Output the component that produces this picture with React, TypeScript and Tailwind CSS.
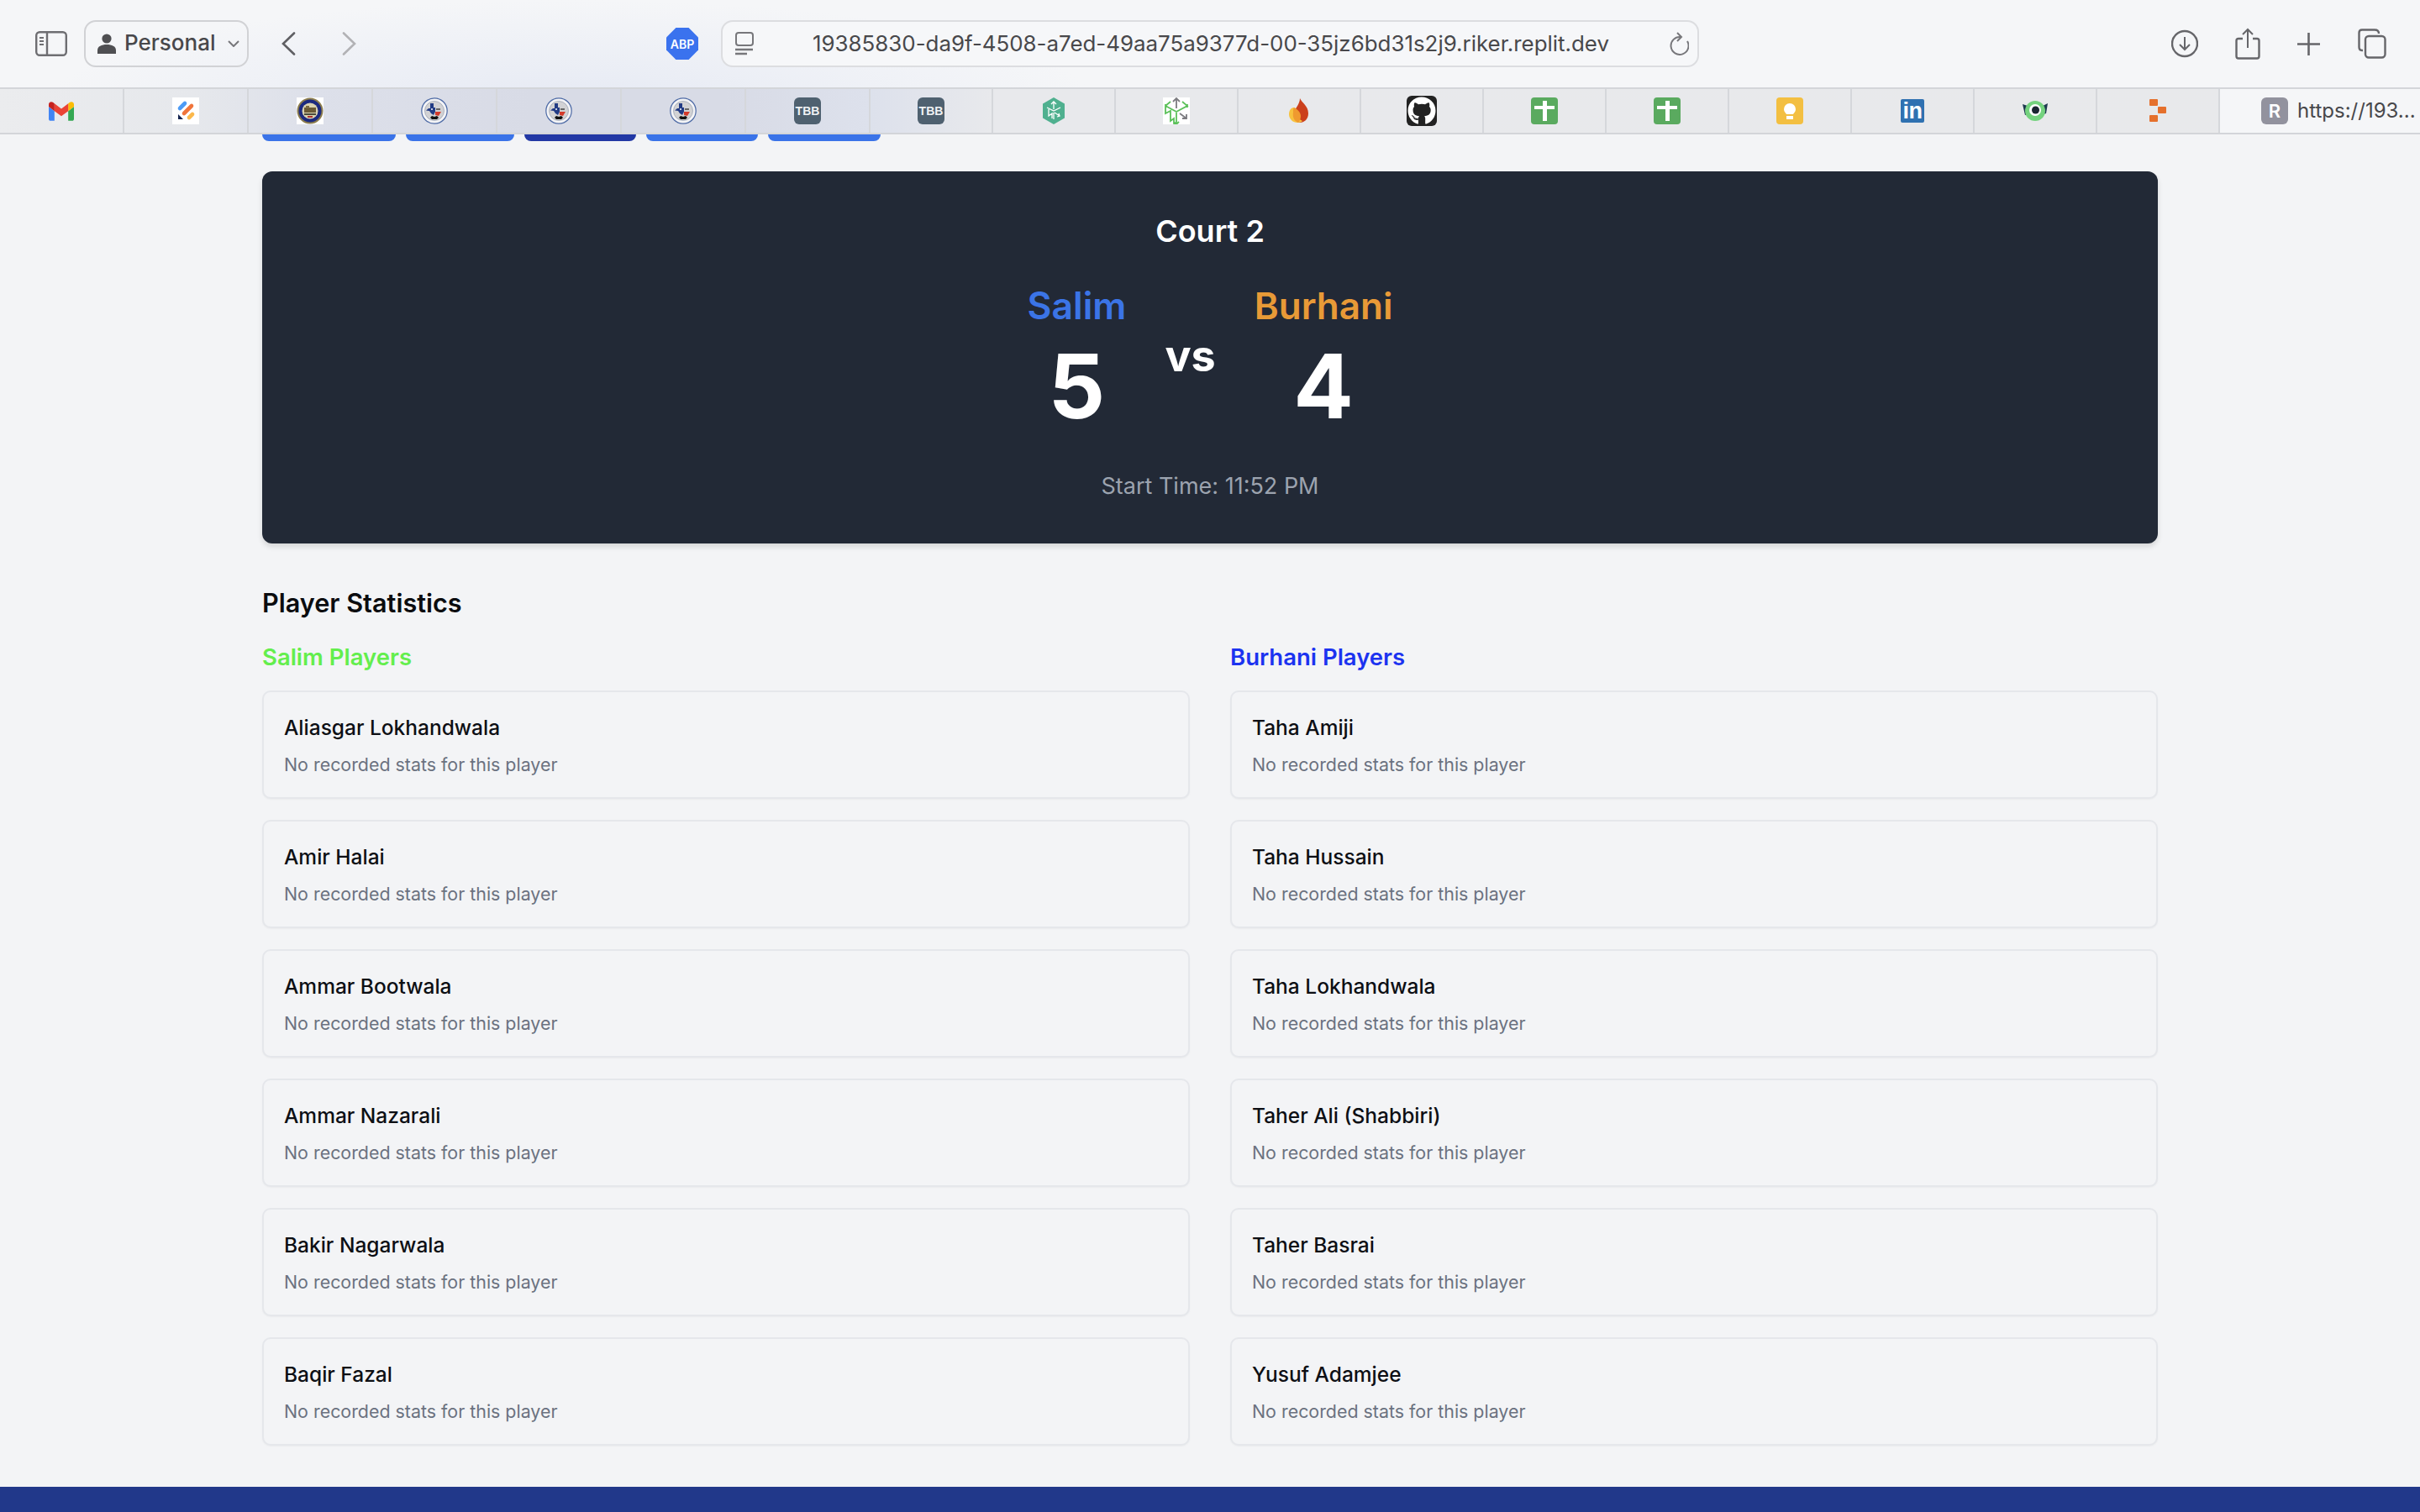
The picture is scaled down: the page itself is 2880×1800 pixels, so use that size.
import React from "react";
import { FaGithub } from "react-icons/fa";

const Gmail = () => (
  <svg width="30" height="23" viewBox="52 42 88 66">
    <path fill="#4285f4" d="M58 108h14V74L52 59v43c0 3.32 2.69 6 6 6" />
    <path fill="#34a853" d="M120 108h14c3.32 0 6-2.69 6-6V59l-20 15" />
    <path fill="#fbbc04" d="M120 48v26l20-15v-8c0-7.42-8.47-11.65-14.4-7.2" />
    <path fill="#ea4335" d="M72 74V48l24 18 24-18v26L96 92" />
    <path fill="#c5221f" d="M52 51v8l20 15V48l-5.6-4.2c-5.94-4.45-14.4-.22-14.4 7.2" />
  </svg>
);

const Jira = () => (
  <svg width="32" height="32" viewBox="0 0 32 32">
    <rect width="32" height="32" fill="#fff" />
    <path d="M9 13 L15 7" stroke="#4c9bf5" strokeWidth="4.6" strokeLinecap="round" />
    <path d="M14 19 L23 10" stroke="#f0743a" strokeWidth="4.6" strokeLinecap="round" />
    <path d="M20 24 L24 20" stroke="#fbb84b" strokeWidth="4.6" strokeLinecap="round" />
    <path d="M7 20 L13 26 H7 Z" fill="#14234f" />
  </svg>
);

const Houston = () => (
  <svg width="32" height="32" viewBox="0 0 32 32">
    <rect width="32" height="32" fill="#fff" />
    <circle cx="16" cy="16" r="15.5" fill="#8c7d4e" />
    <circle cx="16" cy="16" r="13.5" fill="#1c2a80" />
    <circle cx="16" cy="16" r="9.5" fill="#d9d2b0" />
    <rect x="9" y="12" width="14" height="6" fill="#6b5a35" />
    <rect x="11" y="10" width="4" height="3" fill="#7b6a40" />
    <rect x="9" y="19" width="14" height="2" fill="#4b4b3a" />
    <rect x="13" y="22" width="6" height="2" fill="#a33" />
  </svg>
);

const Seal = () => (
  <svg width="32" height="32" viewBox="0 0 32 32">
    <circle cx="16" cy="16" r="15.2" fill="#f4f4f6" stroke="#4d6aa5" strokeWidth="1.2" />
    <circle cx="16" cy="16" r="11.5" fill="#d2d2d4" stroke="#8a93a8" strokeWidth="0.6" />
    <path d="M11 7 H15 V12 H17 V17 L15 21 L12 19 L10 16 L6 15.5 L9 13 H11 Z" fill="#233c85" />
    <path d="M17 17 H24 L21 22 L17 21 Z" fill="#d33a2b" />
    <rect x="18" y="13" width="5" height="2" fill="#666" />
    <path d="M11 24 L13 22 L16 23 L19 22 L21 24 L19 26 H13 Z" fill="#111" />
    <circle cx="13" cy="14" r="1" fill="#fff" />
  </svg>
);

const Tbb = () => (
  <div className="w-[32px] h-[32px] rounded-[6px] bg-[#4f6170] flex items-center justify-center text-[#f0f2f4] text-[14px] font-bold font-['Liberation_Sans',sans-serif]">
    TBB
  </div>
);

const Hex = () => (
  <svg width="28" height="32" viewBox="0 0 28 32" fill="none">
    <path d="M14 0 L27 7.5 V24.5 L14 32 L1 24.5 V7.5 Z" fill="#4fb08f" />
    <path d="M14 5 V14 M11 8 L14 5 L17 8 M6 12 L14 16 L22 12 M21 22 L15 18 M20 19 L21 22 L18 23 M8 14 V22 L12 19 V25 M14 18 V26" stroke="#fff" strokeWidth="1.3" />
  </svg>
);

const Cube = () => (
  <svg width="32" height="32" viewBox="0 0 32 32" fill="none">
    <rect width="32" height="32" fill="#fff" />
    <path d="M16 1 V13 M12 5 L16 1 L20 5 M20 19 L28 25 M28 20 V25 H23" stroke="#7c7c80" strokeWidth="1.8" />
    <path d="M3 10 L9 5 M3 10 L16 17 L29 10 L23 5 M3 10 V19 L9 16 V28 L13 25 V31 L16 32 M16 17 V32 M3 8 V12 M29 8 V12 M13 29 L16 32 L19 29" stroke="#5cc15a" strokeWidth="1.8" />
  </svg>
);

const Flame = () => (
  <svg width="24" height="30" viewBox="0 0 24 30">
    <path d="M13 0 C15 5 23 9 23 18 C23 25 18 29 13 29 C8 29 6 25 6 19 C6 12 13 8 13 0 Z" fill="#cb401d" />
    <path d="M6 11 C2 11 0 15 0 19 C0 25 5 29 10 29 C13 29 15 28 16 27 C11 25 9 20 9 16 C9 14 8 12 6 11 Z" fill="#f7c23e" />
    <path d="M6 11 C10 13 14 17 14 21 C14 24 13 27 11 29 C6 27 4 22 5 17 C5 14 5 12 6 11 Z" fill="#ef9a2f" />
  </svg>
);

const Github = () => (
  <div className="w-[36px] h-[36px] rounded-[6px] bg-[#222222] flex items-center justify-center text-white">
    <FaGithub size={34} />
  </div>
);

const Plus = () => (
  <svg width="32" height="32" viewBox="0 0 32 32">
    <rect width="32" height="32" rx="4" fill="#5aaa5f" />
    <rect x="14" y="4" width="5" height="24" fill="#fff" />
    <rect x="4" y="10" width="24" height="4" fill="#fff" />
  </svg>
);

const Bulb = () => (
  <svg width="32" height="32" viewBox="0 0 32 32">
    <rect width="32" height="32" rx="4" fill="#f3bf41" />
    <path d="M16 7 a7 7 0 0 1 7 7 c0 3 -2 4 -3 6 H12 c-1 -2 -3 -3 -3 -6 a7 7 0 0 1 7 -7 Z" fill="#fff" />
    <rect x="12" y="22" width="8" height="4" fill="#fff" />
  </svg>
);

const Linkedin = () => (
  <div className="w-[28px] h-[28px] rounded-[2px] bg-[#2f71b1] flex items-center justify-center text-white text-[27px] leading-[28px] font-bold font-['Liberation_Sans',sans-serif] tracking-[-0.5px]">
    in
  </div>
);

const Eye = () => (
  <svg width="32" height="24" viewBox="0 0 32 24">
    <path d="M1 4 L7 6 L8 16 L4 17 Z" fill="#1e3a4f" />
    <path d="M31 3 L25 6 L26 16 L29 15 Z" fill="#1e3a4f" />
    <circle cx="16" cy="12" r="12" fill="#74d27e" />
    <circle cx="16" cy="11" r="7" fill="#fff" />
    <circle cx="16.5" cy="11" r="4.5" fill="#1a2531" />
  </svg>
);

const Dash = () => (
  <svg width="20" height="28" viewBox="0 0 20 28">
    <rect x="0" y="0" width="10" height="8" rx="1" fill="#e5702c" />
    <rect x="10" y="9" width="10" height="8" rx="1" fill="#e5702c" />
    <rect x="0" y="19" width="10" height="8" rx="1" fill="#e5702c" />
  </svg>
);

const Tab = ({ w, children }: { w: string; children: React.ReactNode }) => (
  <div className={`${w} h-full shrink-0 flex items-center justify-center border-r-2 border-[#d5d7db]`}>{children}</div>
);

const tabsA: React.ReactNode[] = [<Gmail />, <Jira />, <Houston />, <Seal />, <Seal />, <Seal />, <Tbb />];
const tabsB: React.ReactNode[] = [<Tbb />, <Hex />, <Cube />, <Flame />, <Github />, <Plus />, <Plus />, <Bulb />, <Linkedin />, <Eye />, <Dash />];

const Toolbar = () => (
  <div className="h-[104px] flex items-center bg-[radial-gradient(ellipse_620px_120px_at_680px_120px,#e6eaf4,#f5f6f8)] text-[#4b4b4e]">
    <svg className="ml-[42px] shrink-0" width="38" height="30" viewBox="0 0 38 30" fill="none" stroke="#6e6e72" strokeWidth="2.4">
      <rect x="1.2" y="1.2" width="35.6" height="27.6" rx="4" />
      <path d="M14 1.2 V28.8" />
      <path d="M5 8 H10 M5 12 H10 M5 16 H10" strokeWidth="2" />
    </svg>
    <div className="ml-[20px] w-[196px] h-[56px] shrink-0 rounded-[14px] border-2 border-[#d1d2d5] flex items-center pl-[14px]">
      <svg width="22" height="24" viewBox="0 0 22 24" fill="#4f4f52">
        <circle cx="11" cy="6" r="5.6" />
        <path d="M0 24 V20 C0 15 5 13 11 13 C17 13 22 15 22 20 V24 Z" />
      </svg>
      <span className="ml-[10px] text-[26px] leading-[32px] mb-[2px] font-medium font-['Inter',sans-serif] text-[#48484b]">Personal</span>
      <svg className="ml-[14px]" width="14" height="8" viewBox="0 0 14 8" fill="none" stroke="#77777b" strokeWidth="2">
        <path d="M1 1 L7 7 L13 1" />
      </svg>
    </div>
    <svg className="ml-[39px] shrink-0" width="17" height="28" viewBox="0 0 17 28" fill="none" stroke="#5f5f63" strokeWidth="2.6" strokeLinecap="round">
      <path d="M15 1.5 L2 14 L15 26.5" />
    </svg>
    <svg className="ml-[55px] shrink-0" width="17" height="28" viewBox="0 0 17 28" fill="none" stroke="#b2b2b5" strokeWidth="2.6" strokeLinecap="round">
      <path d="M2 1.5 L15 14 L2 26.5" />
    </svg>
    <div className="ml-[369px] w-[38px] h-[38px] shrink-0 bg-[#3a72ee] [clip-path:polygon(30%_0,70%_0,100%_30%,100%_70%,70%_100%,30%_100%,0_70%,0_30%)] flex items-center justify-center text-white text-[14px] font-semibold font-['Inter',sans-serif]">
      ABP
    </div>
    <div className="ml-[27px] w-[1164px] h-[56px] shrink-0 rounded-[14px] border-2 border-[#dcdde0] flex items-center bg-[#f6f7f9]">
      <svg className="ml-[14px] shrink-0" width="24" height="28" viewBox="0 0 24 28" fill="none" stroke="#77777b" strokeWidth="2">
        <rect x="2" y="1" width="20" height="15" rx="3" />
        <path d="M1 21 H22 M1 26 H15" strokeWidth="2.4" />
      </svg>
      <span className="ml-[69px] w-[950px] shrink-0 text-[25.9px] font-['Inter',sans-serif] text-[#48484b] whitespace-nowrap">
        19385830-da9f-4508-a7ed-49aa75a9377d-00-35jz6bd31s2j9.riker.replit.dev
      </span>
      <svg className="ml-[69px] shrink-0" width="24" height="28" viewBox="0 0 24 28" fill="none" stroke="#77777b" strokeWidth="2">
        <path d="M14 6 A10.5 10.5 0 1 0 22 11" />
        <path d="M10 1 L15 6 L10 11" />
      </svg>
    </div>
    <svg className="ml-[562px] shrink-0" width="32" height="34" viewBox="0 0 32 34" fill="none" stroke="#66666a" strokeWidth="2.4">
      <circle cx="16" cy="17" r="15" />
      <path d="M16 9 V24 M10 18 L16 24 L22 18" strokeWidth="2" />
    </svg>
    <svg className="ml-[44px] shrink-0" width="30" height="38" viewBox="0 0 30 38" fill="none" stroke="#66666a" strokeWidth="2.4">
      <path d="M9 13 H4 Q1.5 13 1.5 15.5 V34 Q1.5 36.5 4 36.5 H26 Q28.5 36.5 28.5 34 V15.5 Q28.5 13 26 13 H21" />
      <path d="M15 24 V2 M9 8 L15 2 L21 8" strokeWidth="2" />
    </svg>
    <svg className="ml-[44px] shrink-0" width="27" height="27" viewBox="0 0 27 27" fill="none" stroke="#66666a" strokeWidth="2.6">
      <path d="M13.5 0 V27 M0 13.5 H27" />
    </svg>
    <svg className="ml-[45px] shrink-0" width="34" height="36" viewBox="0 0 34 36" fill="none" stroke="#66666a" strokeWidth="2.4">
      <path d="M6 26 H5 Q1.5 26 1.5 22 V5 Q1.5 1.5 5 1.5 H20 Q25 1.5 25 6" />
      <rect x="9" y="9" width="23.5" height="25.5" rx="4" />
    </svg>
  </div>
);

const TabStrip = () => (
  <div className="h-[56px] flex border-y-2 border-[#d3d5d9] bg-[linear-gradient(90deg,#ebecee_0%,#e6e8ec_8%,#dde0ea_13%,#d8dbe6_22%,#d8dbe6_30%,#dde1ec_36%,#e8e9ec_41%,#e8e9eb_100%)]">
    {tabsA.map((t, i) => (
      <Tab key={i} w="w-[148px]">{t}</Tab>
    ))}
    {tabsB.map((t, i) => (
      <Tab key={i} w="w-[146px]">{t}</Tab>
    ))}
    <div className="flex-1 flex items-center bg-[#f5f6f8] pl-[49px]">
      <div className="w-[32px] h-[32px] rounded-[6px] bg-[#92929e] flex items-center justify-center text-white text-[22px] font-semibold font-['Inter',sans-serif]">
        R
      </div>
      <span className="ml-[11px] text-[24px] font-['Inter',sans-serif] text-[#48484b] whitespace-nowrap">https://193...</span>
    </div>
  </div>
);

const Player = ({ name }: { name: string }) => (
  <div className="h-[129px] rounded-[10px] border-2 border-[#e5e7eb] bg-[#f3f4f6] px-[24px] pt-[24px] shadow-[0_1px_2px_rgba(0,0,0,0.04)]">
    <div className="text-[24.5px] leading-[36px] font-medium text-[#0d0f14]">{name}</div>
    <div className="mt-[10px] text-[21.4px] leading-[32px] text-[#6b7280]">No recorded stats for this player</div>
  </div>
);

const salim = ["Aliasgar Lokhandwala", "Amir Halai", "Ammar Bootwala", "Ammar Nazarali", "Bakir Nagarwala", "Baqir Fazal"];
const burhani = ["Taha Amiji", "Taha Hussain", "Taha Lokhandwala", "Taher Ali (Shabbiri)", "Taher Basrai", "Yusuf Adamjee"];

export default function App() {
  return (
    <div className="w-[2880px] h-[1800px] overflow-hidden flex flex-col bg-[#f3f4f6] font-['Inter',sans-serif]">
      <Toolbar />
      <TabStrip />
      <div className="flex-1 px-[312px]">
        <div className="flex gap-[12px]">
          <div className="w-[159px] h-[8px] rounded-b-[8px] bg-[#3a73e8]" />
          <div className="w-[129px] h-[8px] rounded-b-[8px] bg-[#3a73e8]" />
          <div className="w-[133px] h-[8px] rounded-b-[8px] bg-[#2238a5]" />
          <div className="w-[133px] h-[8px] rounded-b-[8px] bg-[#3a73e8]" />
          <div className="w-[134px] h-[8px] rounded-b-[8px] bg-[#3a73e8]" />
        </div>
        <div className="mt-[36px] h-[443px] rounded-[12px] bg-[#222936] shadow-[0_4px_6px_rgba(0,0,0,0.12)] flex flex-col items-center pt-[47px]">
          <div className="text-[36px] leading-[48px] font-semibold text-white">Court 2</div>
          <div className="mt-[35px] flex items-center gap-[46px]">
            <div className="flex flex-col items-center">
              <div className="text-[44.5px] leading-[60px] font-semibold text-[#3b74e6]">Salim</div>
              <div className="mt-[13px] text-[106px] leading-[106px] font-bold text-white">5</div>
            </div>
            <div className="text-[52px] leading-[64px] font-bold text-white">vs</div>
            <div className="flex flex-col items-center">
              <div className="text-[44px] leading-[60px] font-semibold text-[#e89a37]">Burhani</div>
              <div className="mt-[13px] text-[106px] leading-[106px] font-bold text-white">4</div>
            </div>
          </div>
          <div className="mt-[48px] text-[27px] leading-[36px] text-[#9ca3af]">Start Time: 11:52 PM</div>
        </div>
        <div className="mt-[49px] text-[30.6px] leading-[44px] font-semibold text-[#0b0c0f]">Player Statistics</div>
        <div className="mt-[22px] grid grid-cols-2 gap-x-[48px]">
          <div className="flex flex-col">
            <div className="text-[27.5px] leading-[40px] font-semibold text-[#63ee4d]">Salim Players</div>
            <div className="mt-[20px] flex flex-col gap-[25px]">
              {salim.map((n) => (
                <Player key={n} name={n} />
              ))}
            </div>
          </div>
          <div className="flex flex-col">
            <div className="text-[27.5px] leading-[40px] font-semibold text-[#1c33f0]">Burhani Players</div>
            <div className="mt-[20px] flex flex-col gap-[25px]">
              {burhani.map((n) => (
                <Player key={n} name={n} />
              ))}
            </div>
          </div>
        </div>
      </div>
      <div className="h-[30px] shrink-0 bg-[#21388a]" />
    </div>
  );
}
